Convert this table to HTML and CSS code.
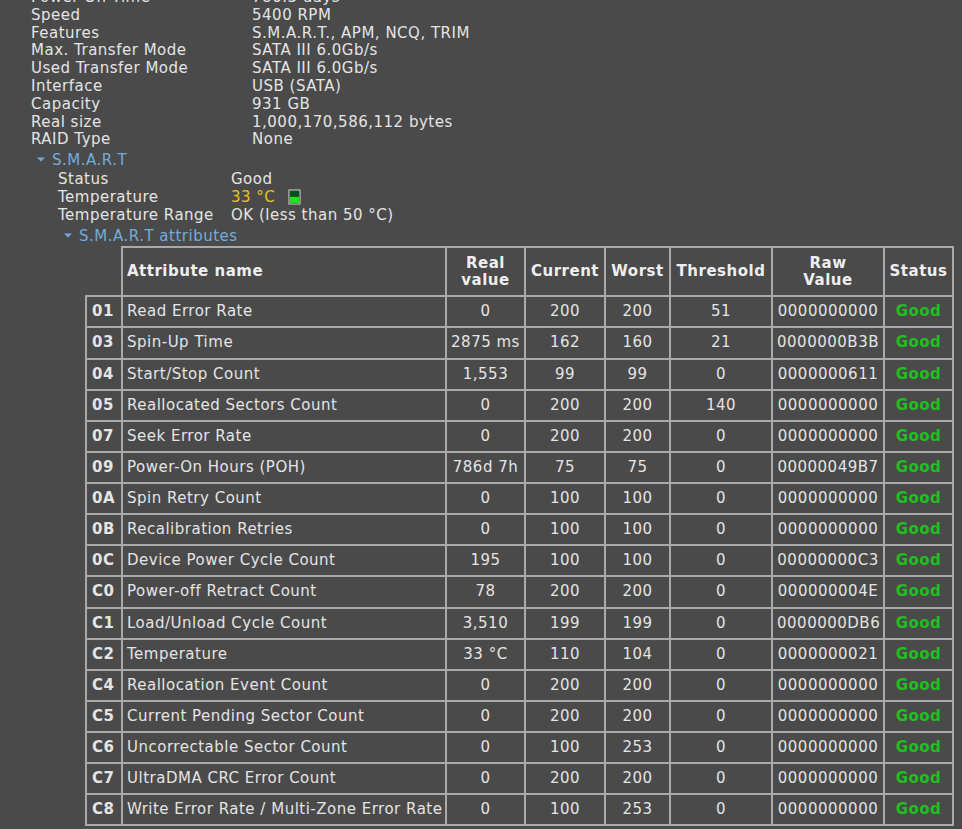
FILE: index.html
```html
<!DOCTYPE html>
<html>
<head>
<meta charset="utf-8">
<link rel="stylesheet" href="styles.css">
</head>
<body>
<div class="page">
  <div class="props">
    <div class="k">Power On Time</div><div class="v">786.3 days</div>
    <div class="k">Speed</div><div class="v">5400 RPM</div>
    <div class="k">Features</div><div class="v">S.M.A.R.T., APM, NCQ, TRIM</div>
    <div class="k">Max. Transfer Mode</div><div class="v">SATA III 6.0Gb/s</div>
    <div class="k">Used Transfer Mode</div><div class="v">SATA III 6.0Gb/s</div>
    <div class="k">Interface</div><div class="v">USB (SATA)</div>
    <div class="k">Capacity</div><div class="v">931 GB</div>
    <div class="k">Real size</div><div class="v">1,000,170,586,112 bytes</div>
    <div class="k">RAID Type</div><div class="v">None</div>
  </div>
  <div class="node node-smart">
    <div class="node-title"><svg class="arrow" width="8" height="5" viewBox="0 0 8 5"><path d="M0 0.5h8L4 4.5z" fill="#72acdc"/></svg>S.M.A.R.T</div>
    <div class="props props-smart">
      <div class="k">Status</div><div class="v">Good</div>
      <div class="k">Temperature</div><div class="v"><span class="temp">33 °C</span><svg class="temp-icon" width="13" height="16" viewBox="0 0 13 16"><rect x="0.5" y="0.5" width="12" height="15" fill="#d8d8d8"/><rect x="1.5" y="1.5" width="10" height="13" fill="#0a3a0a"/><rect x="2" y="2" width="9" height="6" fill="#0c6a0c"/><path d="M4 2v6M6 2v6M8 2v6M10 2v6M2 4h9M2 6h9" stroke="#033" stroke-width="0.6"/><rect x="2" y="8" width="9" height="6" fill="#19e619"/></svg></div>
      <div class="k">Temperature Range</div><div class="v">OK (less than 50 °C)</div>
    </div>
    <div class="node-title node-sub"><svg class="arrow" width="8" height="5" viewBox="0 0 8 5"><path d="M0 0.5h8L4 4.5z" fill="#72acdc"/></svg>S.M.A.R.T attributes</div>
  </div>
  <table class="attrs">
    <colgroup>
      <col class="c-id"><col class="c-name"><col class="c-real"><col class="c-cur"><col class="c-worst"><col class="c-thr"><col class="c-raw"><col class="c-st">
    </colgroup>
    <thead>
      <tr>
        <th class="blank"></th>
        <th class="left">Attribute name</th>
        <th>Real<br>value</th>
        <th>Current</th>
        <th>Worst</th>
        <th>Threshold</th>
        <th>Raw<br>Value</th>
        <th>Status</th>
      </tr>
    </thead>
    <tbody>
      <tr><td class="id">01</td><td class="name">Read Error Rate</td><td>0</td><td>200</td><td>200</td><td>51</td><td>0000000000</td><td class="good">Good</td></tr>
      <tr><td class="id">03</td><td class="name">Spin-Up Time</td><td>2875 ms</td><td>162</td><td>160</td><td>21</td><td>0000000B3B</td><td class="good">Good</td></tr>
      <tr><td class="id">04</td><td class="name">Start/Stop Count</td><td>1,553</td><td>99</td><td>99</td><td>0</td><td>0000000611</td><td class="good">Good</td></tr>
      <tr><td class="id">05</td><td class="name">Reallocated Sectors Count</td><td>0</td><td>200</td><td>200</td><td>140</td><td>0000000000</td><td class="good">Good</td></tr>
      <tr><td class="id">07</td><td class="name">Seek Error Rate</td><td>0</td><td>200</td><td>200</td><td>0</td><td>0000000000</td><td class="good">Good</td></tr>
      <tr><td class="id">09</td><td class="name">Power-On Hours (POH)</td><td>786d 7h</td><td>75</td><td>75</td><td>0</td><td>00000049B7</td><td class="good">Good</td></tr>
      <tr><td class="id">0A</td><td class="name">Spin Retry Count</td><td>0</td><td>100</td><td>100</td><td>0</td><td>0000000000</td><td class="good">Good</td></tr>
      <tr><td class="id">0B</td><td class="name">Recalibration Retries</td><td>0</td><td>100</td><td>100</td><td>0</td><td>0000000000</td><td class="good">Good</td></tr>
      <tr><td class="id">0C</td><td class="name">Device Power Cycle Count</td><td>195</td><td>100</td><td>100</td><td>0</td><td>00000000C3</td><td class="good">Good</td></tr>
      <tr><td class="id">C0</td><td class="name">Power-off Retract Count</td><td>78</td><td>200</td><td>200</td><td>0</td><td>000000004E</td><td class="good">Good</td></tr>
      <tr><td class="id">C1</td><td class="name">Load/Unload Cycle Count</td><td>3,510</td><td>199</td><td>199</td><td>0</td><td>0000000DB6</td><td class="good">Good</td></tr>
      <tr><td class="id">C2</td><td class="name">Temperature</td><td>33 °C</td><td>110</td><td>104</td><td>0</td><td>0000000021</td><td class="good">Good</td></tr>
      <tr><td class="id">C4</td><td class="name">Reallocation Event Count</td><td>0</td><td>200</td><td>200</td><td>0</td><td>0000000000</td><td class="good">Good</td></tr>
      <tr><td class="id">C5</td><td class="name">Current Pending Sector Count</td><td>0</td><td>200</td><td>200</td><td>0</td><td>0000000000</td><td class="good">Good</td></tr>
      <tr><td class="id">C6</td><td class="name">Uncorrectable Sector Count</td><td>0</td><td>100</td><td>253</td><td>0</td><td>0000000000</td><td class="good">Good</td></tr>
      <tr><td class="id">C7</td><td class="name">UltraDMA CRC Error Count</td><td>0</td><td>200</td><td>200</td><td>0</td><td>0000000000</td><td class="good">Good</td></tr>
      <tr><td class="id">C8</td><td class="name">Write Error Rate / Multi-Zone Error Rate</td><td>0</td><td>100</td><td>253</td><td>0</td><td>0000000000</td><td class="good">Good</td></tr>
    </tbody>
  </table>
</div>
</body>
</html>
```

FILE: styles.css
```css
html, body {
  margin: 0;
  padding: 0;
  background: #4a4a4a;
  overflow: hidden;
}
body {
  font-family: "DejaVu Sans", Verdana, sans-serif;
  font-size: 15px;
  letter-spacing: 0.5px;
  color: #e4e4e4;
}
.page {
  margin-top: -11px;
  padding-left: 31px;
}
.props {
  display: grid;
  grid-template-columns: 221px auto;
  line-height: 17.8px;
}
.k, .v {
  white-space: nowrap;
}
.node {
  margin-left: 6px;
}
.node-title {
  color: #72acdc;
  line-height: 20px;
  margin-top: 1px;
}
.arrow {
  margin-right: 7px;
  vertical-align: 3px;
}
.props-smart {
  margin-left: 21px;
  grid-template-columns: 173px auto;
  margin-top: 1px;
  line-height: 17.7px;
}
.node-sub {
  margin-left: 27px;
  margin-top: 2px;
}
.temp {
  color: #e8c21c;
}
.temp-icon {
  margin-left: 13px;
  vertical-align: -3px;
}
.attrs {
  margin-left: 54px;
  margin-top: 0;
  border-collapse: collapse;
  table-layout: fixed;
  width: 869px;
}
.c-id { width: 36px; }
.c-name { width: 324px; }
.c-real { width: 79px; }
.c-cur { width: 80px; }
.c-worst { width: 65px; }
.c-thr { width: 102px; }
.c-raw { width: 112px; }
.c-st { width: 69px; }
.attrs th, .attrs td {
  border: 2px solid #a9a9a9;
  padding: 0 4px;
  text-align: center;
  white-space: nowrap;
  overflow: hidden;
}
.attrs th {
  height: 47px;
  font-weight: bold;
  line-height: 17px;
  color: #eeeeee;
}
.attrs th.left {
  text-align: left;
}
.attrs th.blank {
  border: none;
}
.attrs td {
  height: 29.13px;
  line-height: 17px;
}
.attrs td.id {
  font-weight: bold;
  text-align: left;
  padding-left: 5px;
}
.attrs td.name {
  text-align: left;
}
.attrs td.good {
  color: #1fbf1f;
  font-weight: bold;
}
```
